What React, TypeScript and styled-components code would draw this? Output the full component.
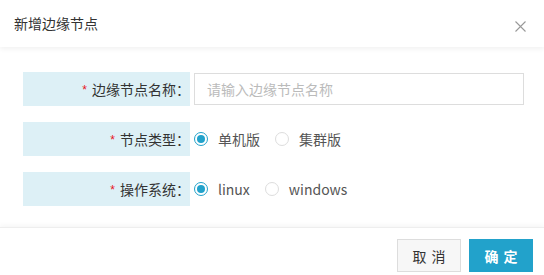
import { FC } from "react";
import styled, { createGlobalStyle } from "styled-components";

const GlobalStyle = createGlobalStyle`
  html, body {
    margin: 0;
    padding: 0;
    background: #fff;
  }
  * {
    box-sizing: border-box;
  }
  body {
    font-family: "Noto Sans CJK SC", "Noto Sans", sans-serif;
  }
`;

const primary = "#22a2cb";

type Option = { label: string; checked?: boolean };

const RadioGroup: FC<{ options: Option[] }> = ({ options }) => (
  <Radios>
    {options.map((o) => (
      <RadioItem key={o.label}>
        <Circle checked={!!o.checked} />
        <RadioText>{o.label}</RadioText>
      </RadioItem>
    ))}
  </Radios>
);

export default function App() {
  return (
    <>
      <GlobalStyle />
      <Dialog>
        <Header>
          <Title>新增边缘节点</Title>
          <Close aria-label="close">
            <svg width="11" height="11" viewBox="0 0 11 11">
              <path d="M0.5 0.5 L10.5 10.5 M10.5 0.5 L0.5 10.5" stroke="#999" strokeWidth="1.1" fill="none" />
            </svg>
          </Close>
        </Header>
        <Body>
          <Row>
            <Label>
              <Star>*</Star>边缘节点名称：
            </Label>
            <Input placeholder="请输入边缘节点名称" />
          </Row>
          <Row>
            <Label>
              <Star>*</Star>节点类型：
            </Label>
            <RadioGroup options={[{ label: "单机版", checked: true }, { label: "集群版" }]} />
          </Row>
          <Row>
            <Label>
              <Star>*</Star>操作系统：
            </Label>
            <RadioGroup options={[{ label: "linux", checked: true }, { label: "windows" }]} />
          </Row>
        </Body>
        <Footer>
          <Button>取 消</Button>
          <Button primary>确 定</Button>
        </Footer>
      </Dialog>
    </>
  );
}

const Dialog = styled.div`
  width: 544px;
  height: 275px;
  background: #fff;
  display: flex;
  flex-direction: column;
  overflow: hidden;
`;

const Header = styled.div`
  height: 47px;
  display: flex;
  align-items: center;
  justify-content: space-between;
  padding: 0 18px 0 14px;
  box-shadow: 0 2px 5px rgba(0, 0, 0, 0.06);
  position: relative;
  z-index: 1;
`;

const Title = styled.div`
  font-size: 14px;
  color: #333;
  margin-top: -1px;
`;

const Close = styled.button`
  border: none;
  background: none;
  padding: 0;
  display: flex;
  margin-top: 5px;
  cursor: pointer;
`;

const Body = styled.div`
  flex: 1;
  padding: 25px 0 0 23px;
  display: flex;
  flex-direction: column;
  gap: 16px;
`;

const Row = styled.div`
  display: flex;
  align-items: center;
  gap: 4px;
  height: 34px;
`;

const Label = styled.div`
  width: 167px;
  height: 34px;
  background: #ddf0f6;
  display: flex;
  align-items: center;
  justify-content: flex-end;
  margin-right: -1px;
  font-size: 14px;
  color: #333;
  white-space: nowrap;
`;

const Star = styled.span`
  color: #e8141b;
  font-size: 12px;
  margin-right: 5px;
  font-family: "Liberation Sans", sans-serif;
  position: relative;
  top: 1px;
`;

const Input = styled.input`
  width: 330px;
  height: 32px;
  margin-left: 1px;
  border: 1px solid #ddd;
  padding: 0 12px;
  font-size: 14px;
  font-family: inherit;
  color: #333;
  outline: none;
  &::placeholder {
    color: #bbb;
  }
`;

const Radios = styled.div`
  display: flex;
  align-items: center;
  margin-left: 1px;
`;

const RadioItem = styled.label`
  display: flex;
  align-items: center;
  margin-right: 15px;
`;

const Circle = styled.span<{ checked: boolean }>`
  width: 14px;
  height: 14px;
  border-radius: 50%;
  border: 1px solid ${({ checked }) => (checked ? primary : "#ddd")};
  display: flex;
  align-items: center;
  justify-content: center;
  margin-right: 10px;
  &::after {
    content: "";
    width: 8px;
    height: 8px;
    border-radius: 50%;
    background: ${({ checked }) => (checked ? primary : "transparent")};
  }
`;

const RadioText = styled.span`
  font-size: 14px;
  color: #555;
`;

const Footer = styled.div`
  height: 48px;
  border-top: 1px solid #eee;
  box-shadow: 0 -2px 5px rgba(0, 0, 0, 0.04);
  display: flex;
  justify-content: flex-end;
  align-items: flex-start;
  gap: 8px;
  padding: 11px 11px 0 0;
`;

const Button = styled.button<{ primary?: boolean }>`
  width: 64px;
  height: 33px;
  font-size: 14px;
  font-family: inherit;
  word-spacing: 2px;
  cursor: pointer;
  border: 1px solid ${({ primary: p }) => (p ? primary : "#ddd")};
  background: ${({ primary: p }) => (p ? primary : "#f7f7f7")};
  color: ${({ primary: p }) => (p ? "#fff" : "#333")};
  font-weight: ${({ primary: p }) => (p ? 600 : 400)};
`;
